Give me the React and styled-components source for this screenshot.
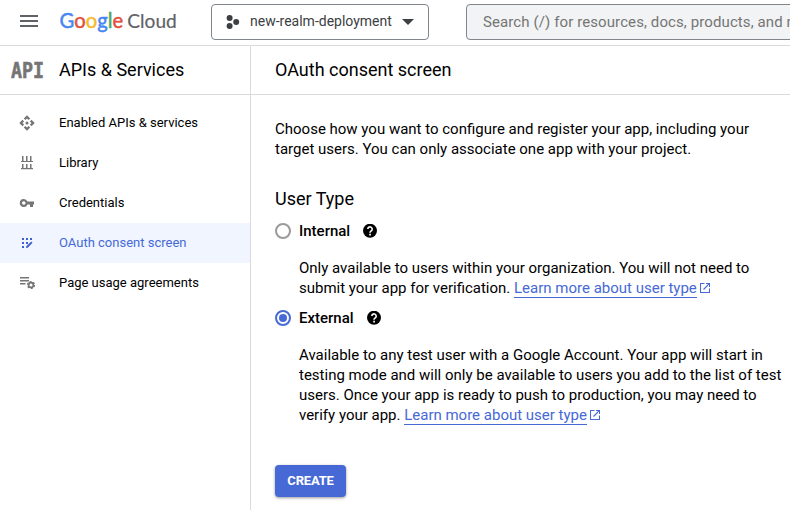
import React from "react";
import styled, { createGlobalStyle } from "styled-components";

const GlobalStyle = createGlobalStyle`
  * { box-sizing: border-box; }
  html, body { margin: 0; overflow: hidden; background: #fff; }
  body { font-family: Roboto, "Liberation Sans", sans-serif; color: #000; }
  svg { display: block; flex: none; }
`;

const Page = styled.div`
  width: 790px;
  height: 510px;
  display: flex;
  flex-direction: column;
  overflow: hidden;
  background: #fff;
`;
const TopBar = styled.header`
  height: 46px;
  flex: none;
  display: flex;
  align-items: flex-start;
  border-bottom: 1px solid #dadada;
`;
const MenuButton = styled.button`
  width: 60px;
  height: 45px;
  padding: 0 0 3px 20px;
  border: 0;
  background: none;
  flex: none;
`;
const Brand = styled.div`
  width: 151px;
  height: 45px;
  flex: none;
`;
const ProjectPicker = styled.button`
  width: 218px;
  height: 36px;
  margin: 4px 37px 0 0;
  padding: 0 14px;
  flex: none;
  display: flex;
  align-items: center;
  border: 1px solid #80868b;
  border-radius: 4px;
  background: #fff;
  color: #3c4043;
  font: 400 14px/20px Roboto, sans-serif;
`;
const ProjectName = styled.span`
  width: 162px;
  padding: 0 0 2px 10px;
  text-align: left;
  white-space: nowrap;
`;
const SearchBox = styled.div`
  width: 400px;
  height: 36px;
  margin-top: 4px;
  padding: 0 16px;
  flex: none;
  border: 1px solid #80868b;
  border-radius: 4px;
  background: #f1f3f4;
  color: #757575;
  font-size: 15px;
  line-height: 34px;
  letter-spacing: 0.1px;
  white-space: nowrap;
`;
const Body = styled.div`
  flex: 1;
  display: flex;
`;
const Sidebar = styled.aside`
  width: 251px;
  flex: none;
  border-right: 1px solid #dadada;
`;
const TitleBar = styled.div`
  height: 49px;
  padding-left: ${(p) => p.$inset}px;
  display: flex;
  align-items: center;
  border-bottom: 1px solid #dadada;
`;
const Title = styled.h1`
  margin: 0;
  font-size: 18px;
  line-height: 24px;
  font-weight: 400;
  white-space: nowrap;
`;
const ApiMark = styled.div`
  width: 48px;
  flex: none;
`;
const Nav = styled.nav`
  padding-top: 8px;
`;
const NavItem = styled.a`
  height: 40px;
  padding-left: 19px;
  display: flex;
  align-items: center;
  gap: 24px;
  color: ${(p) => (p.$active ? "#4669d6" : "#000")};
  background: ${(p) => (p.$active ? "#f0f5ff" : "transparent")};
  font-size: 13px;
  white-space: nowrap;
  svg { color: ${(p) => (p.$active ? "#3d5fd0" : "#757575")}; }
`;
const NavLabel = styled.span`
  padding-bottom: 2px;
`;
const Main = styled.main`
  flex: 1;
  min-width: 0;
`;
const Content = styled.div`
  padding: 24px 0 0 24px;
`;
const Paragraph = styled.p`
  margin: 0;
  font-size: 15px;
  line-height: 20px;
  white-space: nowrap;
`;
const SectionTitle = styled.h2`
  margin: 28px 0 8px;
  font-size: 18px;
  line-height: 24px;
  font-weight: 400;
`;
const Option = styled.label`
  height: 24px;
  display: flex;
  align-items: center;
  font-size: 15px;
  font-weight: 500;
`;
const Radio = styled.span`
  width: 16px;
  height: 16px;
  margin-right: 8px;
  display: grid;
  place-items: center;
  border: 2px solid ${(p) => (p.$checked ? "#4669d6" : "#9a9a9a")};
  border-radius: 50%;
  &::after {
    content: "";
    width: 8px;
    height: 8px;
    border-radius: 50%;
    background: ${(p) => (p.$checked ? "#4669d6" : "transparent")};
  }
`;
const OptionName = styled.span`
  margin-right: 13px;
`;
const Details = styled.div`
  padding: 15px 0 8px 24px;
`;
const Link = styled.a`
  display: inline-block;
  height: 20px;
  color: #4669d6;
  border-bottom: 1px solid #4669d6;
`;
const OpenIcon = styled.svg`
  display: inline-block !important;
  margin-left: 3px;
  vertical-align: 0;
  color: #4669d6;
`;
const CreateButton = styled.button`
  width: 71px;
  height: 32px;
  margin-top: 32px;
  padding: 0;
  border: 0;
  border-radius: 4px;
  background: #4669d6;
  color: #fff;
  font: 700 13px/32px Roboto, sans-serif;
  letter-spacing: -0.2px;
  box-shadow: 0 1px 3px rgba(0, 0, 0, 0.4);
`;

const logoLetters = [
  ["G", "#4a86f0"],
  ["o", "#df5140"],
  ["o", "#f2bd2c"],
  ["g", "#4a86f0"],
  ["l", "#4fa763"],
  ["e", "#df5140"],
];

function Logo() {
  return (
    <svg width="151" height="45" fontFamily="Lato, sans-serif">
      <text x="-0.4" y="28" fontSize="20.5" textLength="63.5" lengthAdjust="spacingAndGlyphs" strokeWidth="0.5">
        {logoLetters.map(([letter, color], i) => (
          <tspan key={i} fill={color} stroke={color}>{letter}</tspan>
        ))}
      </text>
      <text x="67.3" y="28" fontSize="20" fill="#5f6368" stroke="#5f6368" strokeWidth="0.2" textLength="49.5" lengthAdjust="spacingAndGlyphs">Cloud</text>
    </svg>
  );
}

function NavIcon({ name }) {
  return (
    <svg width="16" height="16" viewBox="0 0 16 16" fill="currentColor">
      {name === "api" && (
        <>
          <circle cx="8" cy="8" r="1.5" />
          <path d="M8 .3 11.2 3.5 9.6 5.1 8 3.5 6.4 5.1 4.8 3.5ZM8 15.7 11.2 12.5 9.6 10.9 8 12.5 6.4 10.9 4.8 12.5ZM.3 8 3.5 4.8 5.1 6.4 3.5 8 5.1 9.6 3.5 11.2ZM15.7 8 12.5 4.8 10.9 6.4 12.5 8 10.9 9.6 12.5 11.2Z" />
        </>
      )}
      {name === "library" && (
        <path d="M3 1h1.5v5H7V1h1.5v5H11V1h1.5v5H14v1H2V6h1zM3 9h1.5v4H7V9h1.5v4H11V9h1.5v4H14v1.2H2V13h1z" />
      )}
      {name === "key" && (
        <path fillRule="evenodd" d="M4.8 4a4 4 0 1 0 3.7 5.4H11V12h3V9.4h1V6.5H8.5A4 4 0 0 0 4.8 4Zm0 2.2a1.8 1.8 0 1 1 0 3.6 1.8 1.8 0 0 1 0-3.6Z" />
      )}
      {name === "consent" && (
        <>
          <path d="M3 3h2v2H3zM7 3h2v2H7zM11 3h2v2h-2zM3 7h2v2H3zM7 7h2v2H7zM3 11h2v2H3z" />
          <path d="m7 13 .3-1.8L12.2 6.5 13.5 7.7 8.8 12.7Z" />
        </>
      )}
      {name === "agreement" && (
        <>
          <path d="M1 2h9v1.4H1zM1 5h9v1.4H1zM1 8h5.5v1.4H1z" />
          <g fill="none" stroke="currentColor">
            <circle cx="12" cy="10" r="2.4" strokeWidth="1.7" />
            <circle cx="12" cy="10" r="3.5" strokeWidth="1.2" strokeDasharray="1.9 1.765" />
          </g>
        </>
      )}
    </svg>
  );
}

function Help() {
  return (
    <svg width="14" height="14" viewBox="0 0 14 14">
      <circle cx="7" cy="6.7" r="7" />
      <path d="M4.8 5.1a2.2 2.2 0 1 1 3.6 1.7C7.5 7.5 7 7.8 7 8.7" fill="none" stroke="#fff" strokeWidth="1.6" />
      <path d="M6.2 9.8h1.7v1.6H6.2z" fill="#fff" />
    </svg>
  );
}

function LearnMore() {
  return (
    <>
      <Link>Learn more about user type</Link>
      <OpenIcon width="10" height="10" viewBox="0 0 10 10" fill="none" stroke="currentColor" strokeWidth="1.1">
        <path d="M4.5.5h-4v9h9v-4M6 .5h3.5V4M9.5.5l-6 6" />
      </OpenIcon>
    </>
  );
}

const navItems = [
  ["api", "Enabled APIs & services"],
  ["library", "Library"],
  ["key", "Credentials"],
  ["consent", "OAuth consent screen"],
  ["agreement", "Page usage agreements"],
];

export default function App() {
  return (
    <>
      <GlobalStyle />
      <Page>
        <TopBar>
          <MenuButton aria-label="Menu">
            <svg width="18" height="12" fill="#5f6368">
              <path d="M0 0h18v2H0zM0 5h18v2H0zM0 10h18v2H0z" />
            </svg>
          </MenuButton>
          <Brand><Logo /></Brand>
          <ProjectPicker>
            <svg width="14" height="14" fill="#3c4043">
              <circle cx="3.6" cy="3" r="3" />
              <circle cx="3.6" cy="11" r="3" />
              <circle cx="10.2" cy="7" r="3" />
            </svg>
            <ProjectName>new-realm-deployment</ProjectName>
            <svg width="12" height="6" fill="#3c4043"><path d="M0 0h12L6 6z" /></svg>
          </ProjectPicker>
          <SearchBox>Search (/) for resources, docs, products, and more</SearchBox>
        </TopBar>
        <Body>
          <Sidebar>
            <TitleBar $inset={11}>
              <ApiMark>
                <svg width="36" height="26">
                  <text x="0" y="20.5" fill="#757575" stroke="#757575" strokeWidth="0.6" fontFamily="DejaVu Sans Mono" fontWeight="700" fontSize="21" textLength="33" lengthAdjust="spacingAndGlyphs">API</text>
                </svg>
              </ApiMark>
              <Title>APIs &amp; Services</Title>
            </TitleBar>
            <Nav>
              {navItems.map(([icon, label]) => (
                <NavItem key={icon} $active={icon === "consent"}>
                  <NavIcon name={icon} />
                  <NavLabel>{label}</NavLabel>
                </NavItem>
              ))}
            </Nav>
          </Sidebar>
          <Main>
            <TitleBar $inset={24}><Title>OAuth consent screen</Title></TitleBar>
            <Content>
              <Paragraph>
                Choose how you want to configure and register your app, including your<br />
                target users. You can only associate one app with your project.
              </Paragraph>
              <SectionTitle>User Type</SectionTitle>
              <Option><Radio /><OptionName>Internal</OptionName><Help /></Option>
              <Details>
                <Paragraph>
                  Only available to users within your organization. You will not need to<br />
                  submit your app for verification. <LearnMore />
                </Paragraph>
              </Details>
              <Option><Radio $checked /><OptionName>External</OptionName><Help /></Option>
              <Details>
                <Paragraph>
                  Available to any test user with a Google Account. Your app will start in<br />
                  testing mode and will only be available to users you add to the list of test<br />
                  users. Once your app is ready to push to production, you may need to<br />
                  verify your app. <LearnMore />
                </Paragraph>
              </Details>
              <CreateButton>CREATE</CreateButton>
            </Content>
          </Main>
        </Body>
      </Page>
    </>
  );
}
